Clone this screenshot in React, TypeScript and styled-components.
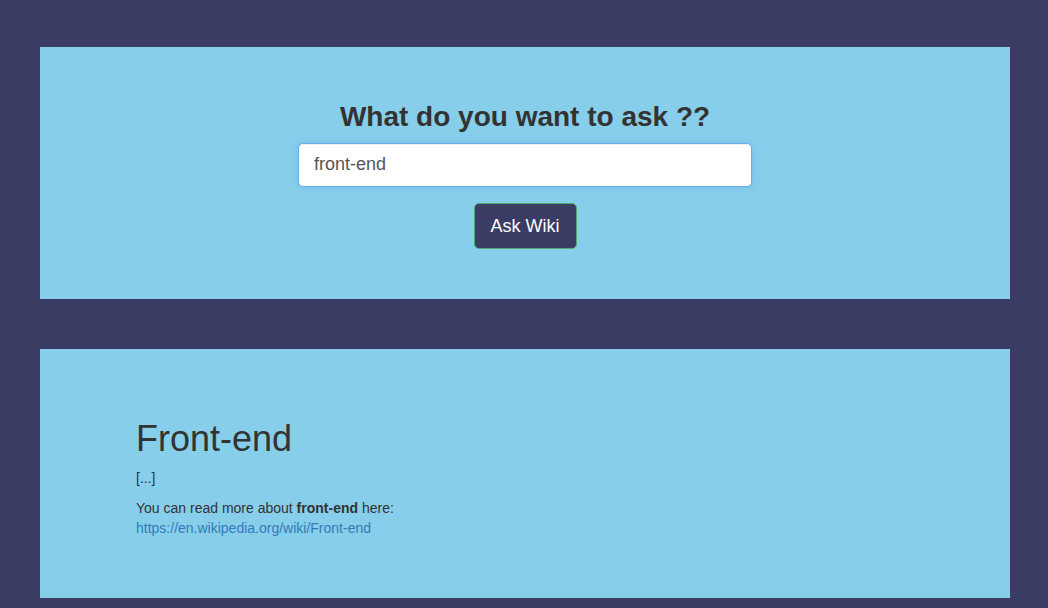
import React, { useState } from "react";
import styled, { createGlobalStyle } from "styled-components";

const Global = createGlobalStyle`
  html, body { margin: 0; padding: 0; }
  body {
    background: #3b3c63;
    font-family: "Liberation Sans", Arial, Helvetica, sans-serif;
    font-size: 14px;
    line-height: 20px;
    color: #333333;
  }
  * { box-sizing: border-box; }
`;

const Page = styled.div`
  display: flex;
  flex-direction: column;
  gap: 50px;
  padding: 47px 0 10px 40px;
`;

const Panel = styled.section<{ $top: number; $bottom: number }>`
  width: 970px;
  background: #87ceeb;
  padding: ${(p) => p.$top}px 0 ${(p) => p.$bottom}px;
`;

const AskForm = styled.form`
  display: flex;
  flex-direction: column;
  align-items: center;
`;

const Question = styled.h2`
  margin: 0 0 10px;
  font-size: 28px;
  line-height: 1.1;
  font-weight: 700;
  color: #333333;
  text-align: center;
`;

const SearchInput = styled.input`
  width: 454px;
  height: 44px;
  padding: 10px 15px;
  font-family: "Liberation Sans", Arial, sans-serif;
  font-size: 18px;
  color: #555555;
  background: #ffffff;
  border: 1px solid #66afe9;
  border-radius: 5px;
  outline: none;
  box-shadow: inset 0 1px 1px rgba(0, 0, 0, 0.075), 0 0 6px rgba(102, 175, 233, 0.6);
`;

const AskButton = styled.button`
  margin-top: 16px;
  height: 46px;
  padding: 10px 16px;
  font-family: "Liberation Sans", Arial, sans-serif;
  font-size: 18px;
  line-height: 24px;
  color: #ffffff;
  background: #3b3c63;
  border: 1px solid #4cae6c;
  border-radius: 5px;
  cursor: pointer;
`;

const Result = styled.article`
  padding-left: 96px;
`;

const Title = styled.h1`
  margin: 0 0 10px;
  font-size: 36px;
  line-height: 1.1;
  font-weight: 400;
  color: #333333;
`;

const Para = styled.p`
  margin: 0 0 10px;
  font-size: 14px;
  line-height: 20px;
`;

const Link = styled.a`
  color: #337ab7;
  text-decoration: none;
`;

export default function App() {
  const [q, setQ] = useState("front-end");
  return (
    <>
      <Global />
      <Page>
        <Panel $top={55} $bottom={50}>
          <AskForm onSubmit={(e) => e.preventDefault()}>
            <Question>What do you want to ask ??</Question>
            <SearchInput value={q} onChange={(e) => setQ(e.target.value)} autoFocus />
            <AskButton type="submit">Ask Wiki</AskButton>
          </AskForm>
        </Panel>
        <Panel $top={70} $bottom={50}>
          <Result>
            <Title>Front-end</Title>
            <Para>[...]</Para>
            <Para>
              You can read more about <b>front-end</b> here:
              <br />
              <Link href="#">https://en.wikipedia.org/wiki/Front-end</Link>
            </Para>
          </Result>
        </Panel>
      </Page>
    </>
  );
}
